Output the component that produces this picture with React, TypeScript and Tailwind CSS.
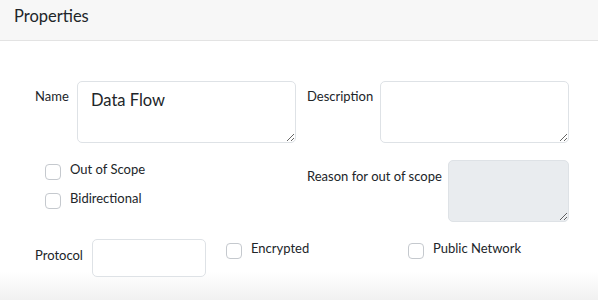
const font = { fontFamily: '"Lato", "Noto Sans", sans-serif' };

const Check = ({ label }: { label: string }) => (
  <label className="flex items-start gap-[9px] text-[13px] leading-5 text-[#212529]">
    <span className="mt-[4px] block h-4 w-4 shrink-0 rounded-[4px] border border-[#c5c9ce] bg-white" />
    <span className="-mt-[1px]">{label}</span>
  </label>
);

const App = () => {
  return (
    <div className="relative h-[300px] w-[598px] overflow-hidden bg-white text-[#212529]" style={font}>
      <div className="absolute bottom-0 left-0 h-[28px] w-full bg-gradient-to-b from-white to-[#f1f1f1]" />

      <div className="relative flex h-[41px] items-center border-b border-[#e3e3e3] bg-[#f7f7f7] px-[14px] pb-[7px]">
        <h2 className="text-[16.5px] font-normal text-[#212529]">Properties</h2>
      </div>

      <div className="relative flex flex-col gap-[17px] pl-[35px] pt-[40px]">
        <div className="flex">
          <div className="flex w-[272px]">
            <span className="w-[42px] pt-[5px] text-[13px] leading-5">Name</span>
            <textarea
              defaultValue="Data Flow"
              className="h-[62px] w-[219px] rounded-[5px] border border-[#dee2e6] bg-white px-[13px] py-[6px] text-[16.5px] leading-6 text-[#212529] outline-none"
            />
          </div>
          <div className="flex">
            <span className="w-[73px] pt-[5px] text-[13px] leading-5">Description</span>
            <textarea className="h-[62px] w-[189px] rounded-[5px] border border-[#dee2e6] bg-white outline-none" />
          </div>
        </div>

        <div className="flex">
          <div className="flex w-[272px] flex-col gap-[9px] pl-[10px]">
            <Check label="Out of Scope" />
            <Check label="Bidirectional" />
          </div>
          <div className="flex">
            <span className="w-[141px] pt-[6px] text-[13px] leading-5">Reason for out of scope</span>
            <textarea disabled className="h-[62px] w-[121px] rounded-[5px] border border-[#dee2e6] bg-[#e9ecef] outline-none" />
          </div>
        </div>

        <div className="flex">
          <div className="flex w-[191px] items-start">
            <span className="w-[57px] pt-[6px] text-[13px] leading-5">Protocol</span>
            <input className="h-[38px] w-[114px] rounded-[5px] border border-[#dee2e6] bg-white outline-none" />
          </div>
          <div className="w-[182px]">
            <Check label="Encrypted" />
          </div>
          <Check label="Public Network" />
        </div>
      </div>
    </div>
  );
};

export default App;
